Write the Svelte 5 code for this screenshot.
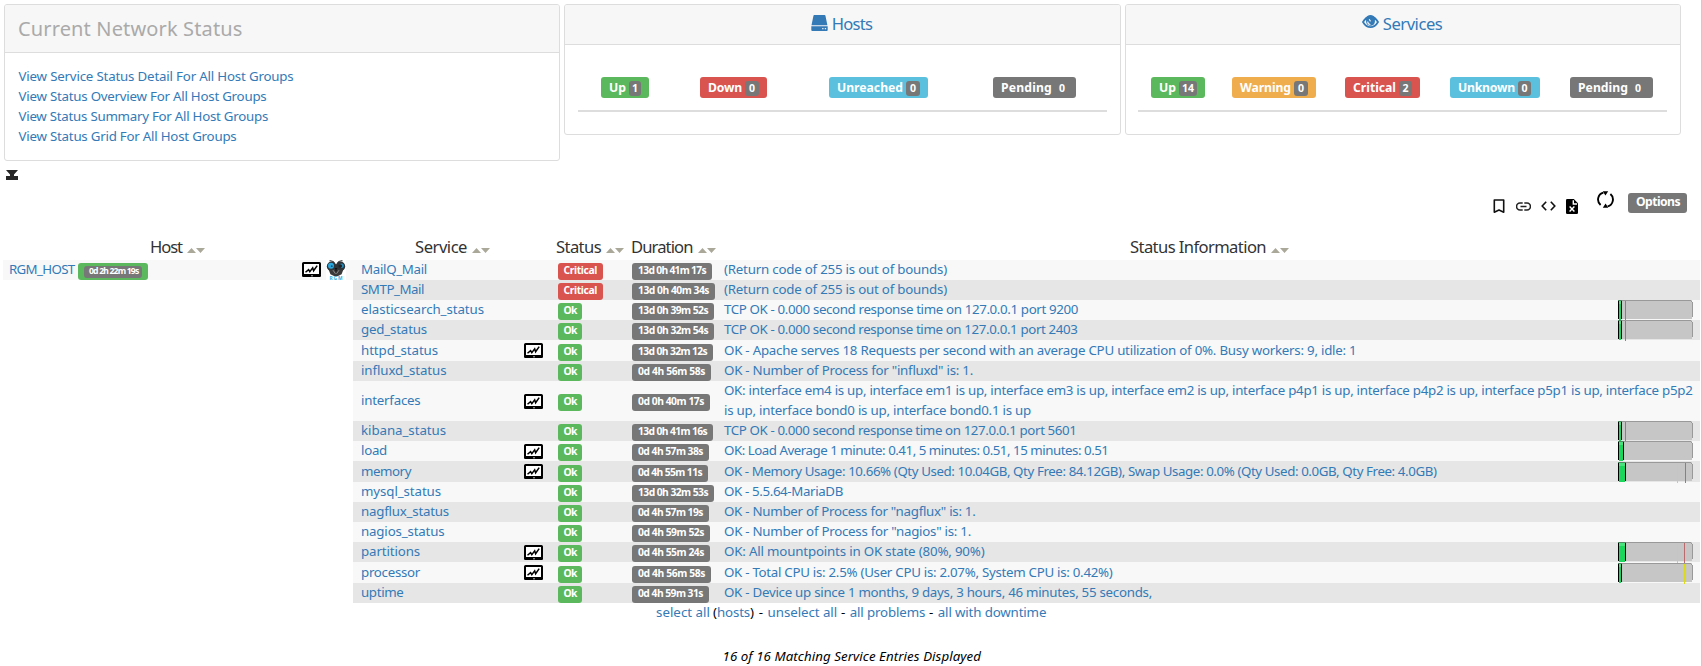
<script>
  const links = [
    ['View Service Status Detail For All Host Groups', 275],
    ['View Status Overview For All Host Groups', 248],
    ['View Status Summary For All Host Groups', 249.5],
    ['View Status Grid For All Host Groups', 218]
  ];
  const hosts = [
    { label: 'Up', n: '1', c: 'green', w: 48, gap: 23, tw: 17, nw: 12 },
    { label: 'Down', n: '0', c: 'red', w: 67, gap: 51, tw: 34, nw: 14 },
    { label: 'Unreached', n: '0', c: 'cyan', w: 99, gap: 62, tw: 66, nw: 14 },
    { label: 'Pending', n: '0', c: 'gray', w: 83, gap: 65, tw: 51, nw: 14 }
  ];
  const services = [
    { label: 'Up', n: '14', c: 'green', w: 54, gap: 13, tw: 17, nw: 18 },
    { label: 'Warning', n: '0', c: 'orange', w: 84, gap: 27, tw: 51, nw: 14 },
    { label: 'Critical', n: '2', c: 'red', w: 75, gap: 29, tw: 43, nw: 13 },
    { label: 'Unknown', n: '0', c: 'cyan', w: 90, gap: 30, tw: 57, nw: 13 },
    { label: 'Pending', n: '0', c: 'gray', w: 83, gap: 30, tw: 50, nw: 14 }
  ];
  const rows = [
    { s: 'MailQ_Mail', sw: 66, d: '13d 0h 41m 17s', dw: 80, crit: true, info: [['(Return code of 255 is out of bounds)', 223]] },
    { s: 'SMTP_Mail', sw: 63, d: '13d 0h 40m 34s', dw: 83, crit: true, info: [['(Return code of 255 is out of bounds)', 223]] },
    { s: 'elasticsearch_status', sw: 123, d: '13d 0h 39m 52s', dw: 82, info: [['TCP OK - 0.000 second response time on 127.0.0.1 port 9200', 354]], bar: { v: 2, r: 7 } },
    { s: 'ged_status', sw: 66, d: '13d 0h 32m 54s', dw: 82, info: [['TCP OK - 0.000 second response time on 127.0.0.1 port 2403', 353.5]], bar: { v: 2, r: 7 } },
    { s: 'httpd_status', sw: 77, d: '13d 0h 32m 12s', dw: 81, g: 1, h: 21, info: [['OK - Apache serves 18 Requests per second with an average CPU utilization of 0%. Busy workers: 9, idle: 1', 632.5]] },
    { s: 'influxd_status', sw: 85.5, d: '0d 4h 56m 58s', dw: 79, info: [['OK - Number of Process for "influxd" is: 1.', 249]] },
    { s: 'interfaces', sw: 59.5, d: '0d 0h 40m 17s', dw: 78, g: 1, h: 40, info: [
      ['OK: interface em4 is up, interface em1 is up, interface em3 is up, interface em2 is up, interface p4p1 is up, interface p4p2 is up, interface p5p1 is up, interface p5p2', 968.5],
      ['is up, interface bond0 is up, interface bond0.1 is up', 307]] },
    { s: 'kibana_status', sw: 85, d: '13d 0h 41m 16s', dw: 81, info: [['TCP OK - 0.000 second response time on 127.0.0.1 port 5601', 352.5]], bar: { v: 2, r: 7 } },
    { s: 'load', sw: 26, d: '0d 4h 57m 38s', dw: 77, g: 1, info: [['OK: Load Average 1 minute: 0.41, 5 minutes: 0.51, 15 minutes: 0.51', 384.5]], bar: { v: 4 } },
    { s: 'memory', sw: 50, d: '0d 4h 55m 11s', dw: 76, g: 1, h: 21, info: [['OK - Memory Usage: 10.66% (Qty Used: 10.04GB, Qty Free: 84.12GB), Swap Usage: 0.0% (Qty Used: 0.0GB, Qty Free: 4.0GB)', 712.5]], bar: { top: 1, v: 6, y: 59, r: 67 } },
    { s: 'mysql_status', sw: 80, d: '13d 0h 32m 53s', dw: 82, info: [['OK - 5.5.64-MariaDB', 119]] },
    { s: 'nagflux_status', sw: 88, d: '0d 4h 57m 19s', dw: 77, info: [['OK - Number of Process for "nagflux" is: 1.', 251.5]] },
    { s: 'nagios_status', sw: 83.5, d: '0d 4h 59m 52s', dw: 78, info: [['OK - Number of Process for "nagios" is: 1.', 247]] },
    { s: 'partitions', sw: 59, d: '0d 4h 55m 24s', dw: 78, g: 1, info: [['OK: All mountpoints in OK state (80%, 90%)', 260.5]], bar: { v: 6, y: 59, r: 66 } },
    { s: 'processor', sw: 59, d: '0d 4h 56m 58s', dw: 79, g: 1, h: 21, info: [['OK - Total CPU is: 2.5% (User CPU is: 2.07%, System CPU is: 0.42%)', 388.5]], bar: { top: 1, v: 2, y: 66 } },
    { s: 'uptime', sw: 42.5, d: '0d 4h 59m 31s', dw: 77, info: [['OK - Device up since 1 months, 9 days, 3 hours, 46 minutes, 55 seconds,', 428]] }
  ];

  // Tracks the text so that it takes up exactly the given width.
  function fit(node, width) {
    const natural = node.getBoundingClientRect().width;
    node.style.letterSpacing = (width - natural) / node.textContent.length + 'px';
  }
</script>

{#snippet t(text, w)}<span class="fit" use:fit={w}>{text}</span>{/snippet}

{#snippet sorter()}
  <svg class="sorter" width="18" height="5" viewBox="0 0 18 5"><path d="M0 5L4.5 0 9 5zM9 0h9l-4.5 5z" fill="#aaa899" /></svg>
{/snippet}

{#snippet graph()}
  <svg class="graph" width="19" height="15" viewBox="0 0 19 15">
    <rect x="1" y="1" width="17" height="12" rx=".6" fill="#fff" stroke="#000" stroke-width="2" />
    <path d="M0 13h19v1.2l-.8.8H.8L0 14.2z" fill="#000" />
    <path d="M3.5 10.3L6.6 7.6 7.8 9.6 10.7 5.8 11.6 8.7 15.2 3.6" fill="none" stroke="#000" stroke-width="1.5" />
    <path d="M9 13.8h2" stroke="#ddd" stroke-width=".8" />
  </svg>
{/snippet}

{#snippet counts(list)}
  <div class="counts">
    {#each list as b}
      <span class="label {b.c}" style="width:{b.w}px;margin-left:{b.gap}px">
        {@render t(b.label, b.tw)}<span class="num" style="width:{b.nw}px">{b.n}</span>
      </span>
    {/each}
  </div>
{/snippet}

<div class="page">
  <div class="panels">
    <section class="panel first">
      <header class="title">{@render t('Current Network Status', 224.5)}</header>
      <div class="links">
        {#each links as [text, w]}<a href="#top">{@render t(text, w)}</a>{/each}
      </div>
    </section>
    <section class="panel">
      <header>
        <svg width="17" height="16" viewBox="0 0 17 16" fill="#337ab7"><path d="M3.3 0h10.3q.6 0 .8.6l2 9.6H.5L2.5.6Q2.7 0 3.3 0zM.3 11.2h16.4V15q0 1-1 1H1.3q-1 0-1-1z" /><path d="M11.2 13h1.3v1.3h-1.3zM13.8 13h1.3v1.3h-1.3z" fill="#f7f7f7" /></svg>
        {@render t('Hosts', 40.5)}
      </header>
      {@render counts(hosts)}
    </section>
    <section class="panel third">
      <header>
        <svg width="17" height="16" viewBox="0 0 17 16"><path d="M1 8Q4 3 8.5 3T16 8Q13 13.2 8.5 13.2T1 8z" fill="none" stroke="#337ab7" stroke-width="1.8" /><path d="M2.8 5.2Q5.2 1 8.5 1t5.7 4.2L12 7H5z" fill="#337ab7" /><circle cx="8.5" cy="7.4" r="4.4" fill="#337ab7" /><path d="M5.7 7.5q0 3 2.7 3M7.2 5.2l1.3 2.2" fill="none" stroke="#f7f7f7" stroke-width="1.1" /></svg>
        {@render t('Services', 59.5)}
      </header>
      {@render counts(services)}
    </section>
  </div>

  <svg class="collapse" width="12" height="10" viewBox="0 0 12 10" fill="#262626"><path d="M0 0h12L8 4.5V6h4v4H0V6h4V4.5z" /></svg>

  <div class="tools">
    <svg class="bookmark" width="12" height="15" viewBox="0 0 12 15"><path d="M1.3 1h9.4V13.2L6 11 1.3 13.2z" fill="none" stroke="#111" stroke-width="1.6" stroke-linejoin="round" /></svg>
    <svg class="link" width="15" height="9" viewBox="0 0 15 9"><path d="M6.7 1.1H4A3.4 3.4 0 0 0 4 7.9H6.7M8.3 1.1H11A3.4 3.4 0 0 1 11 7.9H8.3M4.5 4.5h6" fill="none" stroke="#222" stroke-width="1.5" /></svg>
    <svg class="code" width="15" height="10" viewBox="0 0 15 10"><path d="M5.2.8L1.2 5l4 4.2M9.8.8l4 4.2-4 4.2" fill="none" stroke="#111" stroke-width="1.6" /></svg>
    <svg class="file" width="12" height="15" viewBox="0 0 12 15"><path d="M1.3 0H7.8L12 4.3V13.7Q12 15 10.7 15H1.3Q0 15 0 13.7V1.3Q0 0 1.3 0z" /><path d="M7.3 1.3V5H11M3.6 7.5l4.8 5M8.4 7.5l-4.8 5" stroke="#fff" stroke-width="1.4" fill="none" /></svg>
    <svg class="refresh" width="17" height="17" viewBox="0 0 17 17"><path d="M3.6 13.9A7.1 7.1 0 0 1 6.4 1.6M13.4 3.1A7.1 7.1 0 0 1 10.6 15.4" fill="none" stroke="#000" stroke-width="1.9" /><path d="M5.8.2h5.4L8.4 4.6zM11.2 16.8H5.8l2.8-4.4z" /></svg>
    <span class="label gray options">{@render t('Options', 44)}</span>
  </div>

  <div class="heads">
    <span class="h-host">{@render t('Host', 32)}{@render sorter()}</span>
    <span class="h-service">{@render t('Service', 52)}{@render sorter()}</span>
    <span class="h-status">{@render t('Status', 45)}{@render sorter()}</span>
    <span class="h-duration">{@render t('Duration', 61.5)}{@render sorter()}</span>
    <span class="h-info">{@render t('Status Information', 136)}{@render sorter()}</span>
  </div>

  <div class="table">
    <div class="hostcol">
      <a href="#host">{@render t('RGM_HOST', 65.5)}</a>
      <span class="hostage"><span>{@render t('0d 2h 22m 19s', 49.5)}</span></span>
      {@render graph()}
      <svg class="owl" width="20" height="20" viewBox="0 0 20 20">
        <rect width="20" height="20" fill="#fff" />
        <path d="M3.5 .8Q7 .2 8.4 3M16.5 .8Q13 .2 11.6 3" fill="none" stroke="#333" stroke-width="1.1" />
        <circle cx="5.6" cy="6.4" r="4.8" fill="#2f3438" /><circle cx="14.4" cy="6.4" r="4.8" fill="#2f3438" />
        <path d="M2.6 9.5h14.8L15.6 14.2 11.5 16.3h-3L4.4 14.2z" fill="#3a3a3a" />
        <circle cx="5" cy="5.8" r="3" fill="#2ba6dc" /><circle cx="15.6" cy="5.8" r="2.3" fill="#2789b8" />
        <circle cx="14.3" cy="6.1" r="1.8" fill="#222" /><circle cx="5.8" cy="6.2" r=".9" fill="#174e68" />
        <path d="M7 10.2l2.5 3.6M13 10.2l-2.5 3.6" stroke="#8a8a8a" stroke-width="1" />
        <path d="M8.7 8h2.6L10 12.5z" fill="#111" />
        <text x="10" y="19.8" text-anchor="middle" font-size="4.8" textLength="13" font-weight="bold" fill="#35acde">RGM</text>
      </svg>
    </div>
    <div class="rows">
      {#each rows as r}
        <div class="row" style="height:{r.h ?? 20}px">
          <a class="service" href="#service">{@render t(r.s, r.sw)}</a>
          <span class="graphcell">{#if r.g}{@render graph()}{/if}</span>
          <span class="statuscell"><span class="state {r.crit ? 'red' : 'green'}">{#if r.crit}{@render t('Critical', 33.5)}{:else}{@render t('Ok', 13)}{/if}</span></span>
          <span class="durcell"><span class="state gray">{@render t(r.d, r.dw - 12)}</span></span>
          <a class="info" href="#info">{#each r.info as [text, w]}<span class="line">{@render t(text, w)}</span>{/each}</a>
          {#if r.bar}
            <svg class="bar" class:low={r.bar.top} width="75" height="21" viewBox="0 0 75 21" shape-rendering="crispEdges">
              <path d="M1 0h72l1 1v17l-1 1H1z" fill="#c6c6c6" />
              <path d="M1 0h72v1H1zM73 1h1v1h-1zM74 2h1v15h-1z" fill="#999" />
              <rect x="0" y="1" width="1" height="18" fill="#000" />
              <rect x={r.bar.v + 1} y="1" width="1" height="18" fill="#000" />
              <rect x="1" y="0" width={r.bar.v} height="20" fill="#1bd65b" />
              <rect x="1" y="1" width={r.bar.v} height="3" fill="#48e27c" />
              <rect x="0" y="0" width={r.bar.v + 2} height="1" fill="#4b8a60" />
              {#if r.bar.y}<rect x={r.bar.y} y="1" width="1" height="20" fill="#ddda18" />{/if}
              {#if r.bar.r}<rect x={r.bar.r} y="1" width="1" height="20" fill="#b96b6e" />{/if}
            </svg>
          {/if}
        </div>
      {/each}
    </div>
  </div>

  <div class="select">
    <a href="#all">{@render t('select all', 54)}</a><span>{@render t('(', 4)}</span><a href="#hosts">{@render t('hosts', 33)}</a><span>{@render t(')', 5)}</span><span class="dash">{@render t('-', 5)}</span><a href="#none">{@render t('unselect all', 69.5)}</a><span class="dash">{@render t('-', 5)}</span><a href="#problems">{@render t('all problems', 75.5)}</a><span class="dash">{@render t('-', 5)}</span><a href="#downtime">{@render t('all with downtime', 108.5)}</a>
  </div>
  <div class="total">{@render t('16 of 16 Matching Service Entries Displayed', 258.5)}</div>
</div>

<style>
  :global(body) { background: #fff; overflow: hidden; }
  .page {
    box-sizing: border-box;
    width: 1702px;
    height: 666px;
    padding: 4px 1px 0 3px;
    border-right: 1px solid #ccc;
    font: 13.3px/18px "Noto Sans", "Open Sans", sans-serif;
    color: #000;
    overflow: hidden;
  }
  a { color: #337ab7; text-decoration: none; }
  svg { display: block; flex: none; }
  .fit { display: inline-block; white-space: pre; }
  .panels { display: flex; align-items: flex-start; gap: 4px; height: 166px; padding-left: 1px; }
  .panel {
    box-sizing: border-box;
    width: 557px;
    height: 131px;
    border: 1px solid #ddd;
    border-radius: 3px;
    overflow: hidden;
  }
  .panel.first { width: 556px; height: 157px; }
  .panel.third { width: 556px; }
  header {
    display: flex;
    justify-content: center;
    gap: 4px;
    height: 40px;
    padding-right: 2px;
    box-sizing: border-box;
    background: #f7f7f7;
    border-bottom: 1px solid #ddd;
    color: #337ab7;
    font-size: 16.6px;
    line-height: 38px;
  }
  header svg { margin-top: 10px; }
  .third header svg { margin-top: 9px; }
  header.title { height: 48px; padding: 0 0 0 13px; justify-content: flex-start; color: #aaa; font-size: 20px; line-height: 48px; }
  .links { display: flex; flex-direction: column; padding: 14px 0 0 13.5px; }
  .links a { height: 20px; line-height: 18px; }
  .counts { display: flex; margin: 32px 13px 0 13px; height: 33px; border-bottom: 2px solid #ddd; }
  .third .counts { margin-left: 12px; }
  .label {
    box-sizing: border-box;
    display: flex;
    height: 21px;
    padding-left: 8px;
    border-radius: 3px;
    color: #fff;
    font-size: 12.2px;
    font-weight: 700;
    line-height: 21px;
  }
  .num {
    height: 15px;
    margin: 4px 0 0 3px;
    border-radius: 3px;
    background: #777;
    font-size: 10.5px;
    line-height: 15px;
    text-align: center;
  }
  .green { background: #5cb85c; }
  .red { background: #d9534f; }
  .orange { background: #f0ad4e; }
  .cyan { background: #5bc0de; }
  .gray { background: #777; }
  .collapse { margin-left: 3px; }
  .tools { display: flex; justify-content: flex-end; padding: 11px 13px 0 0; height: 42px; box-sizing: border-box; }
  .bookmark { margin-top: 8px; }
  .link { margin: 11px 0 0 11px; }
  .code { margin: 10px 0 0 10px; }
  .file { margin: 8px 0 0 10px; }
  .refresh { margin: 0 0 0 19px; }
  .options { width: 59px; height: 20px; margin: 2px 0 0 14px; line-height: 18px; }
  .heads { display: flex; height: 38px; box-sizing: border-box; padding-top: 13px; font-size: 16.6px; line-height: 24px; color: #333; }
  .heads > span { display: flex; }
  .heads .sorter { margin: 13px 0 0 5px; }
  .h-host { margin-left: 147px; }
  .h-service { margin-left: 210px; }
  .h-status { margin-left: 66px; }
  .h-duration { margin-left: 7px; }
  .h-info { margin-left: 414.5px; }
  .table { display: flex; align-items: flex-start; }
  .hostcol { display: flex; width: 350px; height: 20px; background: #f8f8f8; padding-left: 6px; box-sizing: border-box; }
  .hostcol > a { width: 69px; }
  .hostage { width: 70px; height: 17px; margin-top: 3px; background: #5cb85c; border-radius: 3px; display: flex; }
  .hostage > span {
    width: 58px; height: 12px; margin: 3px 0 0 6px; padding-left: 5px; box-sizing: border-box;
    background: #777; border-radius: 3px; color: #fff; font-size: 8.6px; font-weight: 700; line-height: 10px;
  }
  .hostcol :global(.graph) { margin: 2px 0 0 154px; }
  .owl { margin-left: 5px; }
  .rows { width: 1347px; }
  .row { display: flex; align-items: center; background: #f8f8f8; }
  .row:nth-child(even) { background: #e6e6e6; }
  .service { width: 170px; height: 20px; box-sizing: border-box; padding-left: 8px; }
  .graphcell { display: flex; width: 35px; box-sizing: border-box; padding-left: 1px; }
  .statuscell { display: flex; width: 74px; height: 20px; }
  .durcell { display: flex; width: 92px; height: 20px; }
  .state {
    height: 17px; margin-top: 3px; padding: 0 6px; border-radius: 3px;
    color: #fff; font-size: 10.3px; font-weight: 700; line-height: 15px; flex: none; white-space: nowrap;
  }
  .statuscell .state { padding: 0 5.5px; }
  .info { width: 894px; }
  .line { display: block; height: 20px; }
  .bar { align-self: flex-start; margin-bottom: -2px; position: relative; z-index: 1; }
  .bar.low { margin-top: 1px; }
  .select { display: flex; height: 44px; padding: 0 0 0 653px; }
  .select a:first-child { margin-right: 3px; }
  .dash { margin: 0 3.8px; }
  .total { padding-left: 719.5px; font-style: italic; }
</style>
